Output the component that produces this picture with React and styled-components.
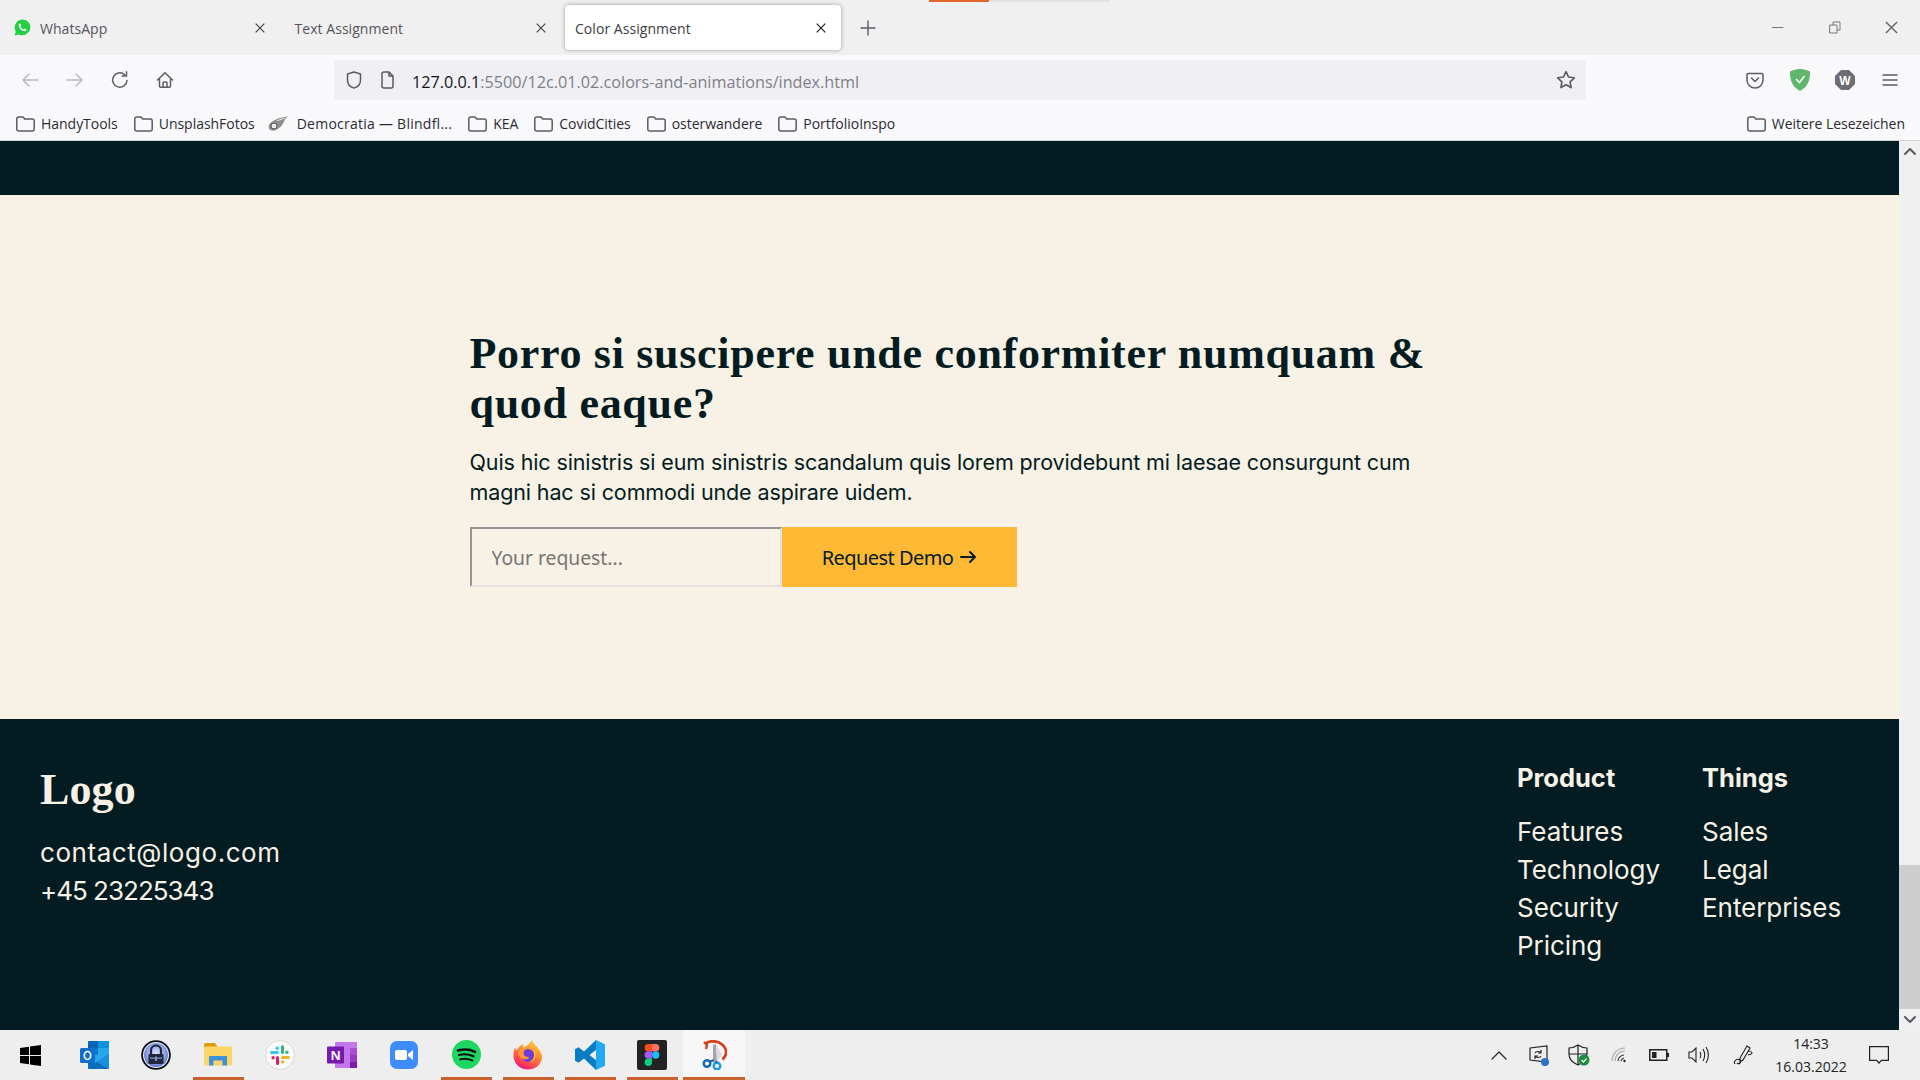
import React from 'react';
import styled, { createGlobalStyle } from 'styled-components';

const DARK = '#021c21';
const CREAM = '#f8f1e5';

const Global = createGlobalStyle`
  html, body { margin: 0; padding: 0; height: 100%; overflow: hidden; }
  #root { height: 100%; }
  * { box-sizing: border-box; }
`;
const Screen = styled.div`
  width: 1920px; height: 1080px; display: flex; flex-direction: column; overflow: hidden;
  font-family: "Open Sans", "Noto Sans", sans-serif; background: #f0f0f0;
`;
const TabStrip = styled.div`
  position: relative; flex: none; height: 55px; background: #f0f0f0; display: flex; align-items: center; padding-left: 4px; gap: 4.5px;
`;
const TopLine = styled.div`
  position: absolute; top: 0; left: 929px; width: 181px; height: 1.5px;
  background: linear-gradient(to right, #e0662c 0 60px, #e4e4e4 60px);
`;
const Tab = styled.div`
  width: 276px; height: 45px; display: flex; align-items: center; padding: 0 15px 0 10px; border-radius: 4px; font-size: 14px; gap: 9px;
  color: ${p => (p.$active ? '#3c3c42' : '#55555b')};
  background: ${p => (p.$active ? '#fff' : 'transparent')};
  box-shadow: ${p => (p.$active ? '0 0 4px rgba(0,0,0,.35)' : 'none')};
`;
const TabTitle = styled.span`flex: 1; white-space: nowrap; padding-top: 1px; letter-spacing: 0.05px;`;
const PlusBox = styled.div`width: 38px; display: flex; justify-content: center; margin-left: 3px;`;
const WindowControls = styled.div`margin-left: auto; display: flex;`;
const WinBtn = styled.div`width: 57px; display: flex; justify-content: center; align-items: center;`;

const NavBar = styled.div`
  flex: none; height: 50px; background: #f9f9fb; display: flex; align-items: center; padding: 0 7.5px;
`;
const NavBtn = styled.div`width: 45px; height: 40px; display: flex; align-items: center; justify-content: center; color: #5b5b66;`;
const UrlBar = styled.div`
  flex: none; width: 1252px; height: 40px; margin-left: 146.5px; background: #f0f0f4; border-radius: 4px; display: flex; align-items: center;
  padding: 0 10px;
`;
const UrlIcon = styled.div`width: 20px; height: 20px; display: flex; align-items: center; justify-content: center; margin-right: ${p => p.$mr}px;`;
const UrlText = styled.div`flex: 1; font-size: 16.2px; color: #7f7f87; white-space: nowrap; padding-top: 3px;`;
const UrlHost = styled.span`color: #15141a;`;
const NavRight = styled.div`margin-left: auto; display: flex;`;

const BookmarkBar = styled.div`
  flex: none; height: 36px; background: #f9f9fb; border-bottom: 1px solid #d4d4d8; display: flex; align-items: center; padding: 2px 15px 0 16px; gap: 16px;
`;
const Bookmark = styled.div`
  display: flex; align-items: center; gap: ${p => p.$gap || 6}px; font-size: 14px; color: #2b2a33; white-space: nowrap;
  letter-spacing: ${p => p.$track ?? -0.03}px;
  margin-left: ${p => (p.$end ? 'auto' : `${p.$ml || 0}px`)};
`;

const Viewport = styled.div`flex: 1; min-height: 0; display: flex;`;
const Page = styled.div`flex: 1; display: flex; flex-direction: column; min-width: 0;`;
const DarkStrip = styled.div`flex: none; height: 54px; background: ${DARK};`;
const Cta = styled.section`flex: none; height: 524px; background: ${CREAM}; padding-top: 134px;`;
const CtaInner = styled.div`width: 960px; margin: 0 auto;`;
const CtaTitle = styled.h2`
  margin: 0 0 18px; font: 700 44px/50px "Liberation Serif", serif; color: ${DARK}; letter-spacing: 0.7px;
`;
const CtaText = styled.p`
  margin: 0 0 20px; font: 400 21.5px/30px Inter, sans-serif; color: ${DARK}; letter-spacing: -0.12px;
`;
const Form = styled.form`display: flex; height: 60px;`;
const Input = styled.input`
  width: 312px; height: 60px; padding: 0 20px; background: ${CREAM}; font: 400 19.3px "Noto Sans", sans-serif; color: #757575;
  border-width: 2px; border-style: solid; border-color: #949494 #e2e2e2 #e2e2e2 #949494; border-radius: 0; outline: none;
  &::placeholder { color: #757575; opacity: 1; }
`;
const Button = styled.button`
  width: 235px; height: 60px; border: none; background: #ffb935; color: ${DARK}; font: 400 20px "Noto Sans", sans-serif;
  display: flex; align-items: center; justify-content: center; gap: 7px; padding: 0; letter-spacing: -0.55px;
`;
const Footer = styled.footer`
  flex: 1; background: ${DARK}; color: ${CREAM}; display: flex; justify-content: space-between; padding: 0 62px 0 40px; font-family: Inter, sans-serif;
`;
const Brand = styled.div`display: flex; flex-direction: column; padding-top: 43px;`;
const LogoText = styled.div`font: 700 44px/56px "Liberation Serif", serif; margin-bottom: 16px; letter-spacing: 0.1px;`;
const Contact = styled.div`font-size: 26px; line-height: 38px; letter-spacing: ${p => p.$track}px;`;
const FooterNav = styled.nav`display: grid; grid-template-columns: 185px 135px; padding-top: 40px;`;
const FooterCol = styled.div`display: flex; flex-direction: column;`;
const ColTitle = styled.div`font-size: 25.5px; font-weight: 700; line-height: 38px; margin-bottom: 16px; white-space: nowrap;`;
const ColLink = styled.div`font-size: 26px; line-height: 38px; white-space: nowrap; letter-spacing: -0.05px;`;

const Scrollbar = styled.div`flex: none; width: 21px; background: #f0f0f0; display: flex; flex-direction: column; align-items: center;`;
const ScrollArrow = styled.div`flex: none; height: 21px; width: 100%; display: flex; align-items: center; justify-content: center;`;
const ScrollTrack = styled.div`flex: 1; width: 100%; display: flex; flex-direction: column; justify-content: flex-end;`;
const ScrollThumb = styled.div`width: 100%; height: 144px; background: #cdcdcd;`;

const Taskbar = styled.div`flex: none; height: 50px; background: #eeeeee; display: flex; align-items: stretch;`;
const TaskStart = styled.div`width: 63px; padding-right: 3px; display: flex; align-items: center; justify-content: center;`;
const TaskItem = styled.div`
  position: relative; width: 62px; display: flex; align-items: center; justify-content: center; padding-bottom: 1px;
  background: ${p => (p.$focus ? '#f6f6f6' : 'transparent')};
  &::after {
    content: ''; display: ${p => (p.$open ? 'block' : 'none')}; position: absolute; bottom: 0; height: 3px; background: #c8622f;
    left: ${p => (p.$focus ? 0 : '5.5px')}; right: ${p => (p.$focus ? 0 : '5.5px')};
  }
`;
const Tray = styled.div`margin-left: auto; display: flex; align-items: center; color: #222;`;
const TrayItem = styled.div`width: 40px; margin-left: ${p => p.$ml || 0}px; display: flex; align-items: center; justify-content: center;`;
const Clock = styled.div`width: 96px; margin-left: -1px; text-align: center; font-size: 14px; line-height: 23px; color: #222;`;
const Notify = styled.div`width: 40px; margin-right: 21px; display: flex; justify-content: center;`;

const Folder = () => (
  <svg width="19" height="16" viewBox="0 0 19 16" fill="none" stroke="#5b5b66" strokeWidth="1.5">
    <path d="M.8 3C.8 1.800 1.600 1 2.800 1h3.400c.8 0 1.300.3 1.700.9l.7 1.100h7.600c1.100 0 2 .9 2 2v8c0 1.100-.9 2-2 2H2.800c-1.100 0-2-.9-2-2z" />
  </svg>
);
const Cross = ({ c = '#3a3a40', s = 10 }) => (
  <svg width={s} height={s} viewBox="0 0 10 10" stroke={c} strokeWidth="1.1"><path d="M.7.7l8.600 8.600M9.300.7L.7 9.300" /></svg>
);
const Whatsapp = () => (
  <svg width="17" height="17" viewBox="0 0 17 17">
    <path d="M8.600.5a7.900 7.900 0 0 0-6.800 11.900L.6 16.500l4.200-1.100A7.900 7.900 0 1 0 8.600.5z" fill="#25cf43" />
    <path d="M5.900 4.500c-.5.1-1.200 1-1.200 2 0 1.300 1 2.800 2.300 4 1.300 1.100 2.800 1.800 3.800 1.700 1-.1 1.800-.9 1.800-1.600 0-.3-1.800-1.200-2.100-1.100-.3.1-.7 1-1 1-.5 0-2.700-1.700-3-2.700 0-.3.7-.7.7-1.100 0-.3-.7-2.200-1.200-2.200z" fill="#fff" />
  </svg>
);
const Line = ({ d, w = 18, h = 18, vb = '0 0 18 18', c = '#5b5b66', sw = 1.5 }) => (
  <svg width={w} height={h} viewBox={vb} fill="none" stroke={c} strokeWidth={sw} strokeLinecap="round" strokeLinejoin="round"><path d={d} /></svg>
);
const Democratia = () => (
  <svg width="20" height="16" viewBox="0 0 20 16">
    <path d="M1 9C3 5 10 1.500 20 .5c-2 1.500-3 2.500-3.500 4C15 9 12 12 8 14c-3 1.500-6 .5-7-1.500-.4-1-.4-2.300 0-3.500z" fill="#8f8f8f" />
    <path d="M8 5c4-2 7-3 10-3.500-2 1-7 3.500-10 3.500z" fill="#fff" />
    <circle cx="6" cy="10" r="3" fill="#e8e8e8" stroke="#555" />
  </svg>
);
const Windows = () => (
  <svg width="21" height="21" viewBox="0 0 21 21" fill="#000"><path d="M0 3l9-1.300V10H0zM10 1.500L21 0v10H10zM0 11h9v8.300L0 18zM10 11h11v10L10 19.500z" /></svg>
);
const Outlook = () => (
  <svg width="29" height="28" viewBox="0 0 29 28">
    <rect x="8" y="0" width="10.500" height="8" rx="1" fill="#0364b8" /><rect x="18" y="0" width="11" height="8" fill="#0f8fe0" />
    <rect x="8" y="7" width="10.500" height="7.500" fill="#0a78d0" /><rect x="18" y="7" width="11" height="7.500" fill="#28a8ea" />
    <path d="M8 14h21v12.500a1.500 1.500 0 0 1-1.500 1.500h-18A1.500 1.500 0 0 1 8 26.500z" fill="#1490df" /><path d="M8 16l21 12H9.500A1.500 1.500 0 0 1 8 26.500z" fill="#0f6cbd" /><path d="M29 13L15 22l-7-4v-4z" fill="#28a8ea" />
    <rect x="0" y="7" width="15" height="15" rx="1.500" fill="#0f6fcb" /><ellipse cx="7.500" cy="14.500" rx="3.200" ry="4" fill="none" stroke="#fff" strokeWidth="1.700" />
  </svg>
);
const Keepass = () => (
  <svg width="30" height="30" viewBox="0 0 30 30">
    <defs><radialGradient id="kpg" cx="0.5" cy="0.45" r="0.6"><stop offset="0" stopColor="#dbe3fa" /><stop offset="0.6" stopColor="#93a9ea" /><stop offset="1" stopColor="#4a62c4" /></radialGradient></defs>
    <circle cx="15" cy="15" r="14.800" fill="#0b0c14" /><circle cx="15" cy="15" r="13" fill="#f0f2fa" /><circle cx="15" cy="15" r="12" fill="url(#kpg)" />
    <path d="M10 14v-3.500a5 5 0 0 1 10 0V14" fill="none" stroke="#22263a" strokeWidth="2.200" /><rect x="7.500" y="14" width="15" height="10" rx="1" fill="#22263a" /><rect x="9" y="17.500" width="12" height="1.300" fill="#7f90c4" /><rect x="14" y="16.500" width="2" height="4.500" fill="#7f90c4" />
  </svg>
);
const Explorer = () => (
  <svg width="28" height="23" viewBox="0 0 28 23">
    <path d="M0 1.500A1.500 1.500 0 0 1 1.500 0H11l2 3v2H0z" fill="#dc9c10" /><rect x="0" y="3.500" width="28" height="19" rx="1.200" fill="#fcd567" /><path d="M5 22.500V14a1 1 0 0 1 1-1h16a1 1 0 0 1 1 1v8.500h-4.500v-5h-9v5z" fill="#3d92d8" />
  </svg>
);
const Slack = () => (
  <svg width="30" height="30" viewBox="0 0 30 30">
    <circle cx="15" cy="15" r="14.500" fill="#fafafa" stroke="#d8d8d8" />
    <rect x="5" y="11" width="9" height="3" rx="1.500" fill="#36c5f0" /><rect x="10.500" y="6.500" width="3.400" height="3.400" rx="1.700" fill="#36c5f0" />
    <rect x="16" y="5" width="3" height="9" rx="1.500" fill="#2eb67d" /><rect x="20.200" y="10.600" width="3.400" height="3.400" rx="1.700" fill="#2eb67d" />
    <rect x="16" y="16" width="9" height="3" rx="1.500" fill="#ecb22e" /><rect x="16" y="20.200" width="3.400" height="3.400" rx="1.700" fill="#ecb22e" />
    <rect x="11" y="16" width="3" height="9" rx="1.500" fill="#e01e5a" /><rect x="6.400" y="16" width="3.400" height="3.400" rx="1.700" fill="#e01e5a" />
  </svg>
);
const OneNote = () => (
  <svg width="30" height="26" viewBox="0 0 30 26">
    <rect x="8" y="0" width="22" height="26" rx="1" fill="#c277ea" /><rect x="23" y="6" width="7" height="7" fill="#a84fd6" /><rect x="23" y="13" width="7" height="7" fill="#9a38c8" /><rect x="23" y="20" width="7" height="6" fill="#7f1bae" />
    <rect x="0" y="4.500" width="17" height="17" rx="1" fill="#7719aa" /><text x="8.500" y="18" textAnchor="middle" fontFamily="Liberation Sans" fontWeight="700" fontSize="13.500" fill="#fff">N</text>
  </svg>
);
const Zoom = () => (
  <svg width="28" height="28" viewBox="0 0 28 28">
    <rect width="28" height="28" rx="7" fill="#3f8cff" /><rect x="5" y="9" width="12" height="10" rx="2" fill="#fff" /><path d="M18 13l5-4v10l-5-4z" fill="#fff" />
  </svg>
);
const Spotify = () => (
  <svg width="29" height="29" viewBox="0 0 29 29">
    <circle cx="14.500" cy="14.500" r="14.500" fill="#1ed760" />
    <g fill="none" stroke="#111" strokeLinecap="round"><path d="M6 10.500c6-1.600 12-1.200 17 1.300" strokeWidth="2.600" /><path d="M7 15c5-1.300 10-.8 14.500 1.300" strokeWidth="2.200" /><path d="M8 19.300c4.500-1 9-.6 12.500 1.200" strokeWidth="1.800" /></g>
  </svg>
);
const Firefox = () => (
  <svg width="30" height="30" viewBox="0 0 30 30">
    <defs>
      <linearGradient id="ffg" x1="0.8" y1="0" x2="0.3" y2="1"><stop offset="0" stopColor="#ffd53a" /><stop offset="0.45" stopColor="#ff8a2f" /><stop offset="0.8" stopColor="#ff3f55" /><stop offset="1" stopColor="#e31587" /></linearGradient>
    </defs>
    <path d="M19 0c.5 3 3 4.500 5.500 7.500 3 3.500 5 7 4.500 10.500C28 25 22 29.500 15 29.500 7 29.500.5 23.500.5 15.500c0-3 .6-6 1.500-8 .5 1.500 1 2.500 2 3 1-3 3-5 6-6.500-.5 2 0 3 1.500 3.500C14 5 17 3.500 19 0z" fill="url(#ffg)" />
    <circle cx="15" cy="15.500" r="6.500" fill="#6e3bd9" />
    <path d="M5.500 12C7 8 11.500 7 15 8.500c-2.500 0-4.500 2-4.500 4.500 0 3 3 4.500 6 4-2 2.500-5.500 3-8 1.300C6.500 17 5 14.500 5.500 12z" fill="#ff9a30" />
    <path d="M20 9c2.500 2 3.500 5 2.500 8-1 3-3.500 5-6.500 5.500 3-2 5-4 5-7.500 0-2.500-.5-4-1-6z" fill="#ffb02e" />
  </svg>
);
const VSCode = () => (
  <svg width="30" height="30" viewBox="0 0 30 30">
    <path d="M21 0L9 11.500 3.500 7.300 0 9.300V20.700l3.500 2L9 18.500 21 30l1-9-7.500-6L22 9z" fill="#0a7cc2" />
    <path d="M21 0l9 4.200v21.600L21 30z" fill="#23a8f2" />
  </svg>
);
const Figma = () => (
  <svg width="30" height="30" viewBox="0 0 30 30">
    <rect width="30" height="30" rx="2" fill="#232323" />
    <path d="M15 4v7.300h-3.700a3.650 3.650 0 0 1 0-7.300z" fill="#f24e1e" /><path d="M15 4h3.700a3.650 3.650 0 0 1 0 7.300H15z" fill="#ff7262" /><path d="M15 11.300v7.300h-3.700a3.650 3.650 0 0 1 0-7.300z" fill="#a259ff" /><circle cx="18.700" cy="15" r="3.650" fill="#1abcfe" /><path d="M11.300 18.600H15v3.700a3.650 3.650 0 1 1-3.700-3.700z" fill="#0acf83" />
  </svg>
);
const Snip = () => (
  <svg width="25" height="30" viewBox="0 0 25 30">
    <path d="M3 4c3-3 9-3.500 14-1.500 5 2.500 7.500 7 7 11-.4 2.500-2 4.500-3.500 6" fill="none" stroke="#d2421c" strokeWidth="2.800" />
    <path d="M2 2l3 3-1 4" fill="none" stroke="#d2421c" strokeWidth="2.400" />
    <path d="M11 5l3-1 1 17-4 2z" fill="#a5a5ad" /><path d="M14 4l6 11-5 7z" fill="#dcdce0" />
    <circle cx="5" cy="23.500" r="3.300" fill="none" stroke="#1467b4" strokeWidth="2.400" /><circle cx="15" cy="26" r="3.300" fill="none" stroke="#1b9ce4" strokeWidth="2.400" />
    <path d="M8 21.500l4-1.500M14.500 23l0-2" stroke="#1467b4" strokeWidth="2" />
  </svg>
);

const tasks = [
  { Icon: Outlook }, { Icon: Keepass }, { Icon: Explorer, open: true }, { Icon: Slack }, { Icon: OneNote }, { Icon: Zoom },
  { Icon: Spotify, open: true }, { Icon: Firefox, open: true }, { Icon: VSCode, open: true }, { Icon: Figma, open: true }, { Icon: Snip, open: true, focus: true },
];
const bookmarks = ['HandyTools', 'UnsplashFotos'];
const bookmarks2 = ['KEA', 'CovidCities', 'osterwandere', 'PortfolioInspo'];

export default function App() {
  return (
    <Screen>
      <Global />
      <TabStrip>
        <TopLine />
        <Tab><Whatsapp /><TabTitle>WhatsApp</TabTitle><Cross /></Tab>
        <Tab><TabTitle>Text Assignment</TabTitle><Cross /></Tab>
        <Tab $active><TabTitle>Color Assignment</TabTitle><Cross c="#15141a" /></Tab>
        <PlusBox><Line d="M8 1v14M1 8h14" w={16} h={16} vb="0 0 16 16" sw={1.4} /></PlusBox>
        <WindowControls>
          <WinBtn><Line d="M0 5.500h11" w={12} h={11} vb="0 0 12 11" c="#777" sw={1} /></WinBtn>
          <WinBtn><Line d="M1 4h7v8H1zM4 4V1h7v8H8" w={12} h={13} vb="0 0 12 13" c="#777" sw={1} /></WinBtn>
          <WinBtn><Cross c="#666" s={13} /></WinBtn>
        </WindowControls>
      </TabStrip>
      <NavBar>
        <NavBtn><Line d="M17 9H2M8 3L2 9l6 6" c="#b9b9bd" /></NavBtn>
        <NavBtn><Line d="M1 9h15M10 3l6 6-6 6" c="#b9b9bd" /></NavBtn>
        <NavBtn><Line d="M16 9.500A7.200 7.200 0 1 1 13.500 3.500M15.500.8v4.200h-4.200" /></NavBtn>
        <NavBtn><Line d="M1.500 9L9 1.800 16.500 9M3.500 7.500v7.500a1.200 1.200 0 0 0 1.200 1.200h8.600a1.200 1.200 0 0 0 1.200-1.200V7.500M7 16.200V12a1 1 0 0 1 1-1h2a1 1 0 0 1 1 1v4.200" /></NavBtn>
        <UrlBar>
          <UrlIcon $mr={14}><Line d="M9 1L2.500 3v6c0 4 3 7 6.500 8 3.500-1 6.500-4 6.500-8V3z" /></UrlIcon>
          <UrlIcon $mr={14}><Line d="M3 3a2 2 0 0 1 2-2h5l4 4v10a2 2 0 0 1-2 2H5a2 2 0 0 1-2-2zM10 1v4h4" /></UrlIcon>
          <UrlText><UrlHost>127.0.0.1</UrlHost>:5500/12c.01.02.colors-and-animations/index.html</UrlText>
          <UrlIcon $mr={0}><Line d="M9 1.500l2.300 4.800 5.200.7-3.800 3.600.9 5.200L9 13.300l-4.600 2.500.9-5.200L1.500 7l5.200-.7z" w={20} h={20} /></UrlIcon>
        </UrlBar>
        <NavRight>
          <NavBtn><Line d="M2 2.500h14a1 1 0 0 1 1 1V9a8 8 0 0 1-16 0V3.500a1 1 0 0 1 1-1zM5.500 7L9 10.500 12.500 7" /></NavBtn>
          <NavBtn>
            <svg width="20" height="22" viewBox="0 0 20 22"><path d="M10 0C6 0 3 1 0 2.500 0 10 1 17 10 22c9-5 10-12 10-19.500C17 1 14 0 10 0z" fill="#5fb66c" /><path d="M6 10l3.500 3.500L14.500 7" fill="none" stroke="#fff" strokeWidth="1.500" /></svg>
          </NavBtn>
          <NavBtn>
            <svg width="20" height="20" viewBox="0 0 20 20"><path d="M6 0h8l6 6v8l-6 6H6l-6-6V6z" fill="#6d6d73" /><text x="10" y="14.500" textAnchor="middle" fontFamily="Liberation Sans" fontWeight="700" fontSize="12" fill="#fff">W</text></svg>
          </NavBtn>
          <NavBtn><Line d="M1 3h14M1 8h14M1 13h14" w={16} h={16} vb="0 0 16 16" /></NavBtn>
        </NavRight>
      </NavBar>
      <BookmarkBar>
        {bookmarks.map(b => <Bookmark key={b}><Folder />{b}</Bookmark>)}
        <Bookmark $gap={9} $ml={-3} $track={0.25}><Democratia />Democratia — Blindfl...</Bookmark>
        {bookmarks2.map(b => <Bookmark key={b}><Folder />{b}</Bookmark>)}
        <Bookmark $end><Folder />Weitere Lesezeichen</Bookmark>
      </BookmarkBar>
      <Viewport>
        <Page>
          <DarkStrip />
          <Cta>
            <CtaInner>
              <CtaTitle>Porro si suscipere unde conformiter numquam &amp; quod eaque?</CtaTitle>
              <CtaText>Quis hic sinistris si eum sinistris scandalum quis lorem providebunt mi laesae consurgunt cum magni hac si commodi unde aspirare uidem.</CtaText>
              <Form>
                <Input placeholder="Your request..." />
                <Button type="button">Request Demo <Line d="M1 7h14M10 2l5 5-5 5" w={16} h={14} vb="0 0 16 14" c={DARK} sw={2} /></Button>
              </Form>
            </CtaInner>
          </Cta>
          <Footer>
            <Brand>
              <LogoText>Logo</LogoText>
              <Contact $track={0.56}>contact@logo.com</Contact>
              <Contact $track={-1}>+45 23225343</Contact>
            </Brand>
            <FooterNav>
              <FooterCol>
                <ColTitle>Product</ColTitle>
                <ColLink>Features</ColLink><ColLink>Technology</ColLink><ColLink>Security</ColLink><ColLink>Pricing</ColLink>
              </FooterCol>
              <FooterCol>
                <ColTitle>Things</ColTitle>
                <ColLink>Sales</ColLink><ColLink>Legal</ColLink><ColLink>Enterprises</ColLink>
              </FooterCol>
            </FooterNav>
          </Footer>
        </Page>
        <Scrollbar>
          <ScrollArrow><Line d="M2 8l5-5 5 5" w={14} h={11} vb="0 0 14 11" sw={2} /></ScrollArrow>
          <ScrollTrack><ScrollThumb /></ScrollTrack>
          <ScrollArrow><Line d="M2 3l5 5 5-5" w={14} h={11} vb="0 0 14 11" sw={2} /></ScrollArrow>
        </Scrollbar>
      </Viewport>
      <Taskbar>
        <TaskStart><Windows /></TaskStart>
        {tasks.map(({ Icon, open, focus }, i) => <TaskItem key={i} $open={open} $focus={focus}><Icon /></TaskItem>)}
        <Tray>
          <TrayItem><Line d="M2 11l7-7 7 7" w={18} h={14} vb="0 0 18 14" c="#222" sw={1.2} /></TrayItem>
          <TrayItem>
            <svg width="22" height="22" viewBox="0 0 22 22" fill="none" stroke="#222" strokeWidth="1.200"><path d="M2 4l17-2v16L2 16zM7 9c1-2 5-2 6 0M13 6v3h-3M13 12c-1 2-5 2-6 0M7 15v-3h3" /><circle cx="17" cy="18" r="4" fill="#2b74c4" stroke="none" /></svg>
          </TrayItem>
          <TrayItem>
            <svg width="22" height="22" viewBox="0 0 22 22" fill="none" stroke="#222" strokeWidth="1.200"><path d="M10 1C7 3 4 4 1 4v6c0 5 4 9 9 11 5-2 9-6 9-11V4c-3 0-6-1-9-3zM10 1v20M1 10h18" /><circle cx="16" cy="16" r="5.500" fill="#1d8a3f" stroke="none" /><path d="M13.500 16l2 2 3-3.500" stroke="#fff" /></svg>
          </TrayItem>
          <TrayItem>
            <svg width="16" height="16" viewBox="0 0 16 16" fill="none" strokeWidth="1.200"><path d="M1 14A13 13 0 0 1 14 1M4 14A10 10 0 0 1 14 4" stroke="#aaa" /><path d="M7 14a7 7 0 0 1 6-6M10 14a4 4 0 0 1 3-3" stroke="#333" /><circle cx="13.500" cy="14" r="1.200" fill="#222" stroke="none" /></svg>
          </TrayItem>
          <TrayItem>
            <svg width="20" height="12" viewBox="0 0 20 12"><rect x=".75" y=".75" width="17" height="10.500" fill="none" stroke="#222" strokeWidth="1.500" /><rect x="3" y="3" width="4.500" height="6" fill="#222" /><rect x="18" y="4" width="2" height="4" fill="#222" /></svg>
          </TrayItem>
          <TrayItem>
            <svg width="22" height="18" viewBox="0 0 22 18" fill="none" stroke="#222" strokeWidth="1.100"><path d="M1 6h3l4-4v14l-4-4H1zM12 6c1 2 1 4 0 6M15 3c2 3.500 2 8.500 0 12M18 1c3 5 3 11 0 16" /></svg>
          </TrayItem>
          <TrayItem $ml={5}>
            <svg width="22" height="22" viewBox="0 0 22 22" fill="none" stroke="#222" strokeWidth="1.100"><path d="M7 14L14 2l3 2-7 12-3 2zM2 20c-2-3 2-6 5-4 2 2-1 5-3 3M15 7c2 0 4 1 4 2 0 2-3 1-4 2" /></svg>
          </TrayItem>
          <Clock>14:33<br />16.03.2022</Clock>
          <Notify>
            <svg width="20" height="18" viewBox="0 0 20 18" fill="none" stroke="#222" strokeWidth="1.200"><path d="M.6.6h18.800v13.800h-7L10 17l-2.400-2.600h-7z" /></svg>
          </Notify>
        </Tray>
      </Taskbar>
    </Screen>
  );
}
